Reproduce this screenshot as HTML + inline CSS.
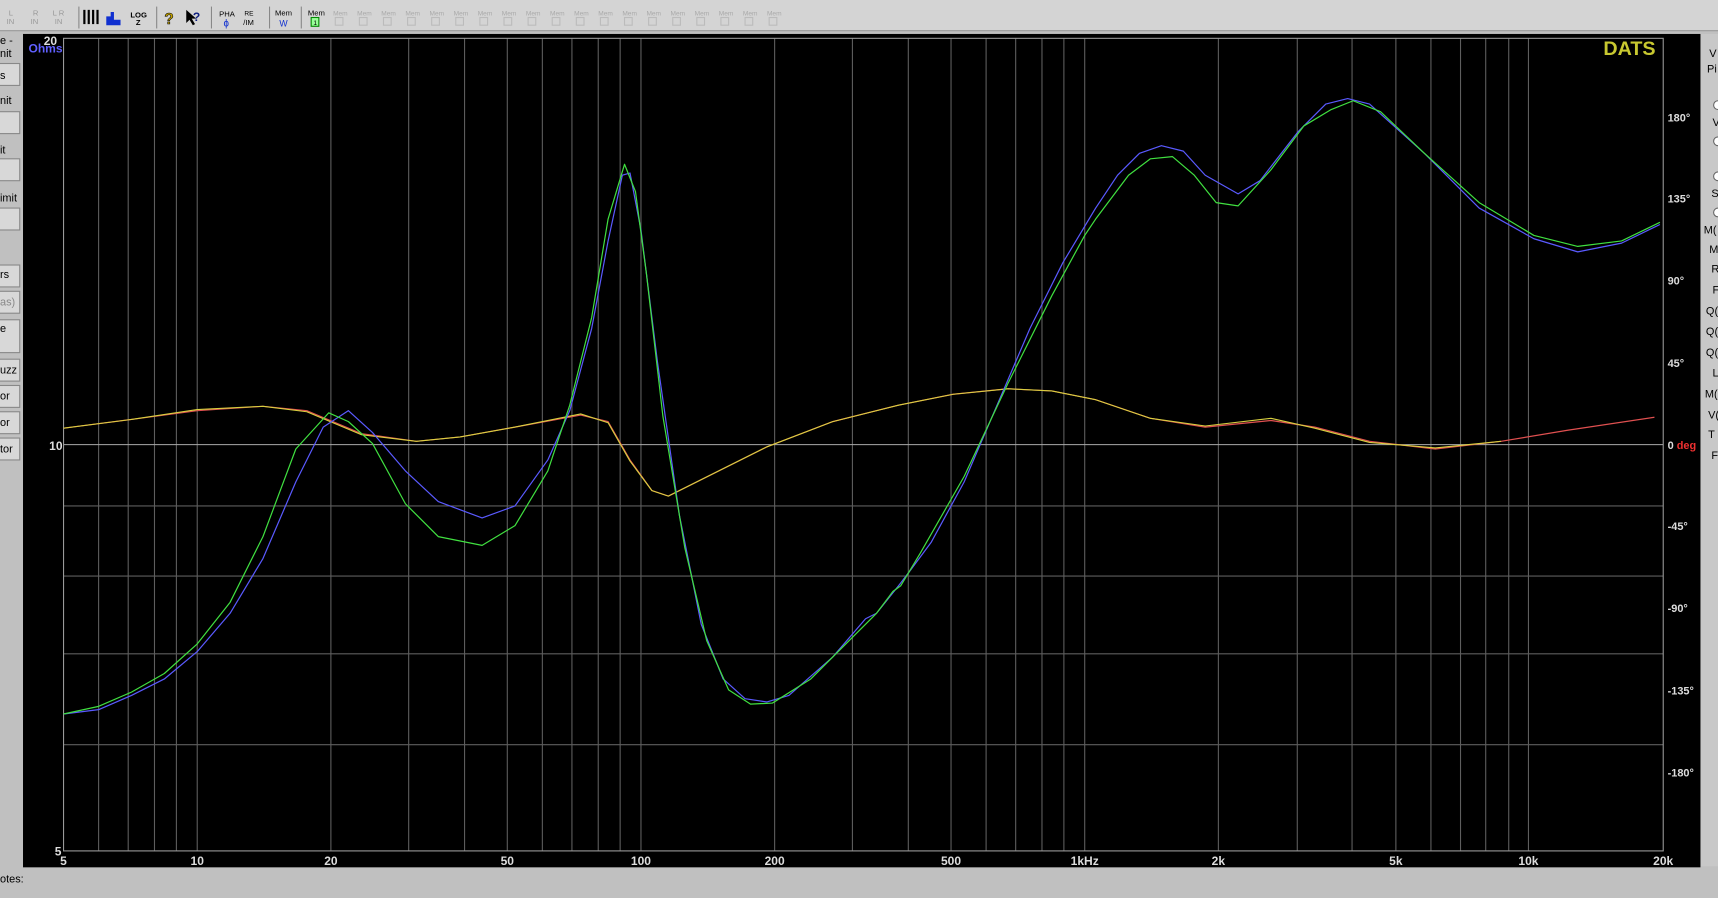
<!DOCTYPE html>
<html><head><meta charset="utf-8"><style>
html,body{margin:0;padding:0;width:1718px;height:898px;overflow:hidden;background:#c8c8c8}
svg{display:block}
text{font-family:"Liberation Sans",sans-serif}
</style></head><body>
<svg width="1718" height="898" viewBox="0 0 1568 820" preserveAspectRatio="none" xmlns="http://www.w3.org/2000/svg">
<rect x="0" y="0" width="1568" height="820" fill="#c0c0c0"/>
<rect x="0" y="0" width="1568" height="28" fill="#d4d4d4"/>
<line x1="0" y1="28" x2="1568" y2="28" stroke="#999"/>
<g font-size="7" fill="#999">
<text x="8" y="14">L</text><text x="6" y="22">IN</text>
<text x="30" y="14">R</text><text x="28" y="22">IN</text>
<text x="48" y="14">L R</text><text x="50" y="22">IN</text>
</g>
<g stroke="#000" stroke-width="2"><line x1="77" y1="9" x2="77" y2="22"/><line x1="81" y1="9" x2="81" y2="22"/><line x1="85" y1="9" x2="85" y2="22"/><line x1="89" y1="9" x2="89" y2="22"/></g>
<path d="M97 23V15h4v-4h3v7h6v5z" fill="#1030d0"/>
<text x="119" y="16" font-size="7" font-weight="bold">LOG</text><text x="124" y="23" font-size="7" font-weight="bold">Z</text>
<text x="150" y="22" font-size="14" font-weight="bold" fill="#c0a000" stroke="#000" stroke-width=".5">?</text>
<path d="M170 9l0 12 3-3 3 5 2-1-3-5h4z" fill="#000"/><text x="176" y="19" font-size="11" font-weight="bold" fill="#102080">?</text>
<text x="200" y="15" font-size="7">PHA</text><text x="204" y="24" font-size="9" fill="#1030d0">ɸ</text>
<text x="223" y="14" font-size="6">RE</text><text x="222" y="23" font-size="7">/IM</text>
<text x="251" y="14" font-size="7">Mem</text><text x="255" y="24" font-size="8" fill="#1030d0">W</text>
<text x="281" y="14" font-size="7">Mem</text><rect x="284" y="16" width="7" height="8" fill="#9f9" stroke="#080"/><text x="286" y="23" font-size="6">1</text>
<g font-size="6" fill="#aaa">
<text x="304" y="14">Mem</text><text x="326" y="14">Mem</text><text x="348" y="14">Mem</text><text x="370" y="14">Mem</text><text x="392" y="14">Mem</text><text x="414" y="14">Mem</text><text x="436" y="14">Mem</text><text x="458" y="14">Mem</text><text x="480" y="14">Mem</text><text x="502" y="14">Mem</text><text x="524" y="14">Mem</text><text x="546" y="14">Mem</text><text x="568" y="14">Mem</text><text x="590" y="14">Mem</text><text x="612" y="14">Mem</text><text x="634" y="14">Mem</text><text x="656" y="14">Mem</text><text x="678" y="14">Mem</text><text x="700" y="14">Mem</text>
</g>
<g fill="none" stroke="#bbb"><rect x="306" y="16" width="7" height="7"/><rect x="328" y="16" width="7" height="7"/><rect x="350" y="16" width="7" height="7"/><rect x="372" y="16" width="7" height="7"/><rect x="394" y="16" width="7" height="7"/><rect x="416" y="16" width="7" height="7"/><rect x="438" y="16" width="7" height="7"/><rect x="460" y="16" width="7" height="7"/><rect x="482" y="16" width="7" height="7"/><rect x="504" y="16" width="7" height="7"/><rect x="526" y="16" width="7" height="7"/><rect x="548" y="16" width="7" height="7"/><rect x="570" y="16" width="7" height="7"/><rect x="592" y="16" width="7" height="7"/><rect x="614" y="16" width="7" height="7"/><rect x="636" y="16" width="7" height="7"/><rect x="658" y="16" width="7" height="7"/><rect x="680" y="16" width="7" height="7"/><rect x="702" y="16" width="7" height="7"/></g>
<g stroke="#888"><line x1="72" y1="6" x2="72" y2="26"/><line x1="143" y1="6" x2="143" y2="26"/><line x1="193" y1="6" x2="193" y2="26"/><line x1="246" y1="6" x2="246" y2="26"/><line x1="275" y1="6" x2="275" y2="26"/></g>
<!-- left panel -->
<g fill="#d8d8d8" stroke="#888"><rect x="-2" y="58" width="20" height="20"/><rect x="-2" y="102" width="20" height="20"/><rect x="-2" y="145" width="20" height="20"/><rect x="-2" y="190" width="20" height="20"/><rect x="-2" y="242" width="20" height="20"/><rect x="-2" y="266" width="20" height="20"/><rect x="-2" y="292" width="20" height="30"/><rect x="-2" y="328" width="20" height="20"/><rect x="-2" y="352" width="20" height="20"/><rect x="-2" y="376" width="20" height="20"/><rect x="-2" y="400" width="20" height="20"/></g>
<g font-size="10" fill="#000">
<text x="0" y="40">e -</text><text x="0" y="52">nit</text><text x="0" y="72">s</text><text x="0" y="95">nit</text>
<text x="0" y="140">it</text><text x="0" y="184">imit</text><text x="0" y="254">rs</text><text x="0" y="279" fill="#888">as)</text>
<text x="0" y="303">e</text><text x="0" y="341">uzz</text><text x="0" y="365">or</text><text x="0" y="389">or</text><text x="0" y="413">tor</text>
<text x="0" y="806">otes:</text>
</g>
<!-- right panel -->
<rect x="1552" y="31" width="16" height="760" fill="#c8c8c8"/>
<g font-size="10"><text x="1560" y="52">V</text><text x="1558" y="66">Pi</text><text x="1563" y="115">V</text><text x="1562" y="180">S</text><text x="1555" y="213">M(</text><text x="1560" y="231">M</text><text x="1562" y="249">R</text><text x="1563" y="268">F</text><text x="1557" y="287">Q(</text><text x="1557" y="306">Q(</text><text x="1557" y="325">Q(</text><text x="1563" y="344">L</text><text x="1556" y="363">M(</text><text x="1559" y="382">V(</text><text x="1559" y="400">T</text><text x="1562" y="419">F</text></g>
<g fill="#fff" stroke="#666"><circle cx="1568" cy="96" r="4"/><circle cx="1568" cy="129" r="4"/><circle cx="1568" cy="161" r="4"/><circle cx="1568" cy="194" r="4"/></g>
<!-- chart -->
<rect x="21" y="31" width="1531" height="761" fill="#000"/>
<g stroke="#5e5e5e" stroke-width="1">
<line x1="90" y1="35" x2="90" y2="777"/><line x1="117" y1="35" x2="117" y2="777"/><line x1="141" y1="35" x2="141" y2="777"/><line x1="161" y1="35" x2="161" y2="777"/><line x1="180" y1="35" x2="180" y2="777"/>
<line x1="302" y1="35" x2="302" y2="777"/><line x1="373" y1="35" x2="373" y2="777"/><line x1="424" y1="35" x2="424" y2="777"/><line x1="463" y1="35" x2="463" y2="777"/><line x1="495" y1="35" x2="495" y2="777"/><line x1="522" y1="35" x2="522" y2="777"/><line x1="546" y1="35" x2="546" y2="777"/><line x1="566" y1="35" x2="566" y2="777"/><line x1="585" y1="35" x2="585" y2="777"/>
<line x1="707" y1="35" x2="707" y2="777"/><line x1="778" y1="35" x2="778" y2="777"/><line x1="829" y1="35" x2="829" y2="777"/><line x1="868" y1="35" x2="868" y2="777"/><line x1="900" y1="35" x2="900" y2="777"/><line x1="927" y1="35" x2="927" y2="777"/><line x1="951" y1="35" x2="951" y2="777"/><line x1="971" y1="35" x2="971" y2="777"/><line x1="990" y1="35" x2="990" y2="777"/>
<line x1="1112" y1="35" x2="1112" y2="777"/><line x1="1184" y1="35" x2="1184" y2="777"/><line x1="1234" y1="35" x2="1234" y2="777"/><line x1="1274" y1="35" x2="1274" y2="777"/><line x1="1306" y1="35" x2="1306" y2="777"/><line x1="1333" y1="35" x2="1333" y2="777"/><line x1="1356" y1="35" x2="1356" y2="777"/><line x1="1377" y1="35" x2="1377" y2="777"/><line x1="1395" y1="35" x2="1395" y2="777"/>
<line x1="58" y1="462" x2="1518" y2="462"/><line x1="58" y1="526" x2="1518" y2="526"/><line x1="58" y1="597" x2="1518" y2="597"/><line x1="58" y1="680" x2="1518" y2="680"/>
</g>
<line x1="58" y1="406" x2="1518" y2="406" stroke="#aaa"/>
<rect x="58" y="35" width="1460" height="742" fill="none" stroke="#999"/>
<g font-size="11" font-weight="bold" fill="#ddd">
<text x="46" y="41" text-anchor="middle">20</text><text x="51" y="411" text-anchor="middle">10</text><text x="53" y="781" text-anchor="middle">5</text>
<text x="58" y="790" text-anchor="middle">5</text><text x="180" y="790" text-anchor="middle">10</text><text x="302" y="790" text-anchor="middle">20</text><text x="463" y="790" text-anchor="middle">50</text><text x="585" y="790" text-anchor="middle">100</text><text x="707" y="790" text-anchor="middle">200</text><text x="868" y="790" text-anchor="middle">500</text><text x="990" y="790" text-anchor="middle">1kHz</text><text x="1112" y="790" text-anchor="middle">2k</text><text x="1274" y="790" text-anchor="middle">5k</text><text x="1395" y="790" text-anchor="middle">10k</text><text x="1518" y="790" text-anchor="middle">20k</text>
<text x="1522" y="111" font-size="10">180°</text><text x="1522" y="185" font-size="10">135°</text><text x="1522" y="260" font-size="10">90°</text><text x="1522" y="335" font-size="10">45°</text><text x="1522" y="410" font-size="10">0 <tspan fill="#ee3030">deg</tspan></text><text x="1522" y="484" font-size="10">-45°</text><text x="1522" y="559" font-size="10">-90°</text><text x="1522" y="634" font-size="10">-135°</text><text x="1522" y="709" font-size="10">-180°</text>
</g>
<text x="26" y="48" font-size="11" font-weight="bold" fill="#6060ff">Ohms</text>
<text x="1511" y="50" font-size="18" font-weight="bold" fill="#c8c830" text-anchor="end">DATS</text>
<g fill="none" stroke-width="1.1" stroke-linejoin="round">
<polyline stroke="#e05050" points="58,391 120,383 180,375 240,371 280,375 330,396 380,403 420,399 470,390 530,379 555,385 575,420 595,448 610,453 640,438 700,408 760,385 820,370 870,360 920,355 960,357 1000,365 1050,382 1100,390 1160,384 1200,390 1250,403 1310,410 1370,403 1430,393 1510,381"/>
<polyline stroke="#d8d040" stroke-width="1" points="58,391 120,383 180,374 240,371 280,376 330,397 380,403 420,399 470,390 530,378 555,386 575,421 595,448 610,453 640,438 700,408 760,385 820,370 870,360 920,355 960,357 1000,365 1050,382 1100,389 1160,382 1200,391 1250,404 1310,409 1370,403"/>
<polyline stroke="#5a5aff" points="58,652 90,648 120,635 150,620 180,595 210,560 240,510 270,440 295,390 318,375 340,395 370,430 400,458 440,473 470,462 500,420 520,375 540,300 555,220 568,160 575,158 585,210 600,330 620,470 640,570 660,620 680,638 700,641 720,635 760,600 790,565 800,560 820,535 830,522 850,495 880,440 910,370 940,300 970,240 1000,190 1020,160 1040,140 1060,133 1080,138 1100,160 1130,177 1150,165 1185,120 1210,95 1230,90 1250,95 1300,140 1350,190 1400,218 1440,230 1480,222 1515,205"/>
<polyline stroke="#40e040" points="58,652 90,645 120,632 150,615 180,588 210,550 240,490 270,410 300,377 318,385 340,405 370,460 400,490 440,498 470,480 500,430 520,370 540,290 555,200 570,150 580,175 590,250 605,380 625,500 645,585 665,630 685,643 705,642 740,620 800,560 815,540 822,535 840,505 880,435 920,350 960,270 990,215 1000,200 1030,160 1050,145 1070,143 1090,160 1110,185 1130,188 1160,155 1190,115 1215,100 1235,92 1260,102 1300,140 1350,185 1400,215 1440,225 1480,220 1515,203"/>
</g>
</svg>
</body></html>
